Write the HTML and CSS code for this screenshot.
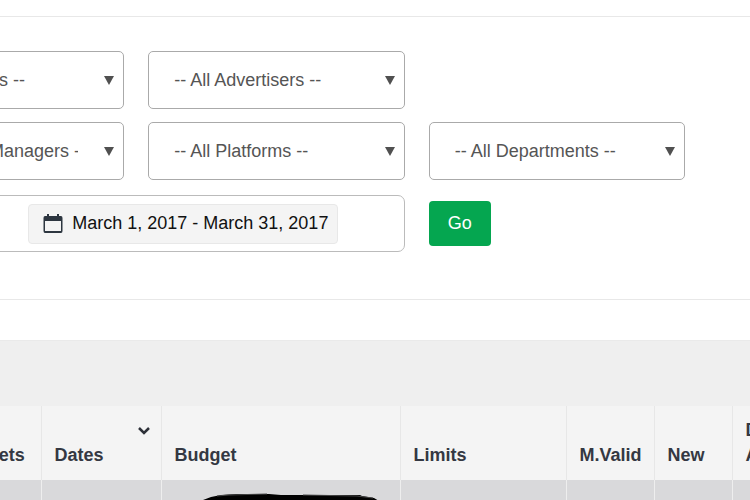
FILE: index.html
```
<!DOCTYPE html>
<html lang="en">
<head>
    <meta charset="UTF-8">
    <meta name="viewport" content="width=device-width, initial-scale=1.0">
    <title>Campaigns</title>
    <link rel="stylesheet" href="styles.css">
</head>
<body>
    <form class="filters">
        <div class="select-box agencies">
            <select name="agency" aria-label="Agencies">
                <option>-- All Agencies --</option>
            </select>
        </div>
        <div class="select-box">
            <select name="advertiser" aria-label="Advertisers">
                <option>-- All Advertisers --</option>
            </select>
        </div>
        <div class="select-box managers">
            <select name="manager" aria-label="Managers">
                <option>-- All Media Managers --</option>
            </select>
        </div>
        <div class="select-box">
            <select name="platform" aria-label="Platforms">
                <option>-- All Platforms --</option>
            </select>
        </div>
        <div class="select-box">
            <select name="department" aria-label="Departments">
                <option>-- All Departments --</option>
            </select>
        </div>
        <div class="date-box">
            <button type="button" class="date-range">
                <svg width="20" height="20" viewBox="0 0 20 20" fill="#2d3640" aria-hidden="true">
                    <path fill-rule="evenodd" d="M2 2h2V0h2v2h8V0h2v2h2q1.500 0 1.500 2v13q0 2-1.500 2H2q-1.500 0-1.500-2V4q0-2 1.500-2zM2 7v10h16V7z"/>
                </svg>
                <span>March 1, 2017 - March 31, 2017</span>
            </button>
        </div>
        <div class="submit-box">
            <button type="submit" class="go-btn">Go</button>
        </div>
    </form>

    <div class="results">
        <table>
            <colgroup>
                <col class="col-targets">
                <col class="col-dates">
                <col class="col-budget">
                <col class="col-limits">
                <col class="col-valid">
                <col class="col-new">
                <col class="col-daily">
            </colgroup>
            <thead>
                <tr>
                    <th>Targets</th>
                    <th>
                        <span class="sort">
                            <svg width="12" height="8" viewBox="0 0 12 8" aria-hidden="true">
                                <path d="M1 1l5 5 5-5" fill="none" stroke="#2d3038" stroke-width="2.500"/>
                            </svg>
                        </span>
                        Dates
                    </th>
                    <th>Budget</th>
                    <th>Limits</th>
                    <th>M.Valid</th>
                    <th>New</th>
                    <th>Daily<br>Average</th>
                </tr>
            </thead>
            <tbody>
                <tr>
                    <td></td>
                    <td></td>
                    <td>
                        <svg class="marker" width="180" height="24" viewBox="0 0 180 24" aria-hidden="true">
                            <path d="M0 7l8-3 10-2 16-1h32l12 1 25 0 54 0 2 1 12 2 5 3 2 16H4z" fill="#000"/>
                            <path d="M14 3l12-1 38-1M100 2l54 1 16 2" fill="none" stroke="#444"/>
                        </svg>
                    </td>
                    <td></td>
                    <td></td>
                    <td></td>
                    <td></td>
                </tr>
            </tbody>
        </table>
    </div>
</body>
</html>
```
FILE: styles.css
```
* {
    margin: 0;
    padding: 0;
    box-sizing: border-box;
}

html {
    overflow: hidden;
}

body {
    font-family: "Liberation Sans", Arial, sans-serif;
    font-size: 18px;
    color: #555;
    background: #fff;
    padding-top: 16px;
}

.filters {
    display: grid;
    grid-template-columns: repeat(3, 1fr);
    gap: 13px 24px;
    border-top: 1px solid #e8e8e8;
    border-bottom: 1px solid #e8e8e8;
    margin-left: -132px;
    padding: 34px 65px 47px 0;
}

.select-box {
    position: relative;
}

.select-box.agencies,
.select-box.managers {
    grid-column: 1;
}

.select-box select {
    display: block;
    width: 100%;
    height: 58px;
    padding: 0 45px 0 25px;
    border: 1px solid #aaa;
    border-radius: 5px;
    background: #fff;
    color: #555;
    font: inherit;
    appearance: none;
}

.select-box::after {
    content: "";
    position: absolute;
    right: 10px;
    top: 25px;
    border: 5px solid transparent;
    border-top: 9px solid #505050;
    border-bottom: 0;
    pointer-events: none;
}

.date-box {
    grid-column: 1 / 3;
    display: flex;
    align-items: center;
    justify-content: center;
    height: 57px;
    margin: 2px 0 0 94px;
    border: 1px solid #bbb;
    border-radius: 7px;
}

.date-range {
    display: flex;
    align-items: center;
    gap: 9px;
    height: 40px;
    padding: 0 9px 0 14px;
    border: 1px solid #e8e8e8;
    border-radius: 4px;
    background: #f4f4f4;
    color: #111;
    font: inherit;
    white-space: nowrap;
}

.submit-box {
    display: flex;
    align-items: center;
    margin-top: 2px;
}

.go-btn {
    width: 62px;
    height: 45px;
    border: none;
    border-radius: 4px;
    background: #05a650;
    color: #fff;
    font: inherit;
    cursor: pointer;
}

.results {
    margin-top: 40px;
    padding-top: 65px;
    background: #efefef;
    border-top: 1px solid #eaeaea;
    overflow: hidden;
}

table {
    width: calc(100% + 142px);
    margin-left: -52px;
    table-layout: fixed;
    border-collapse: collapse;
}

.col-targets {
    width: 93px;
}

.col-dates {
    width: 120px;
}

.col-budget {
    width: 239px;
}

.col-limits {
    width: 166px;
}

.col-valid {
    width: 88px;
}

.col-new {
    width: 78px;
}

th {
    padding: 12px 11px 12px 13px;
    border-right: 1px solid #e7e7e7;
    background: #f4f4f4;
    color: #343842;
    font-size: 18px;
    line-height: 25px;
    text-align: left;
    vertical-align: bottom;
}

td {
    height: 60px;
    padding: 13px 11px 0 13px;
    border-right: 1px solid #eee;
    background: #d9d9db;
    vertical-align: top;
}

.sort {
    display: flex;
    align-items: center;
    justify-content: flex-end;
    height: 25px;
}

.marker {
    display: block;
    margin-left: 28px;
}
```
